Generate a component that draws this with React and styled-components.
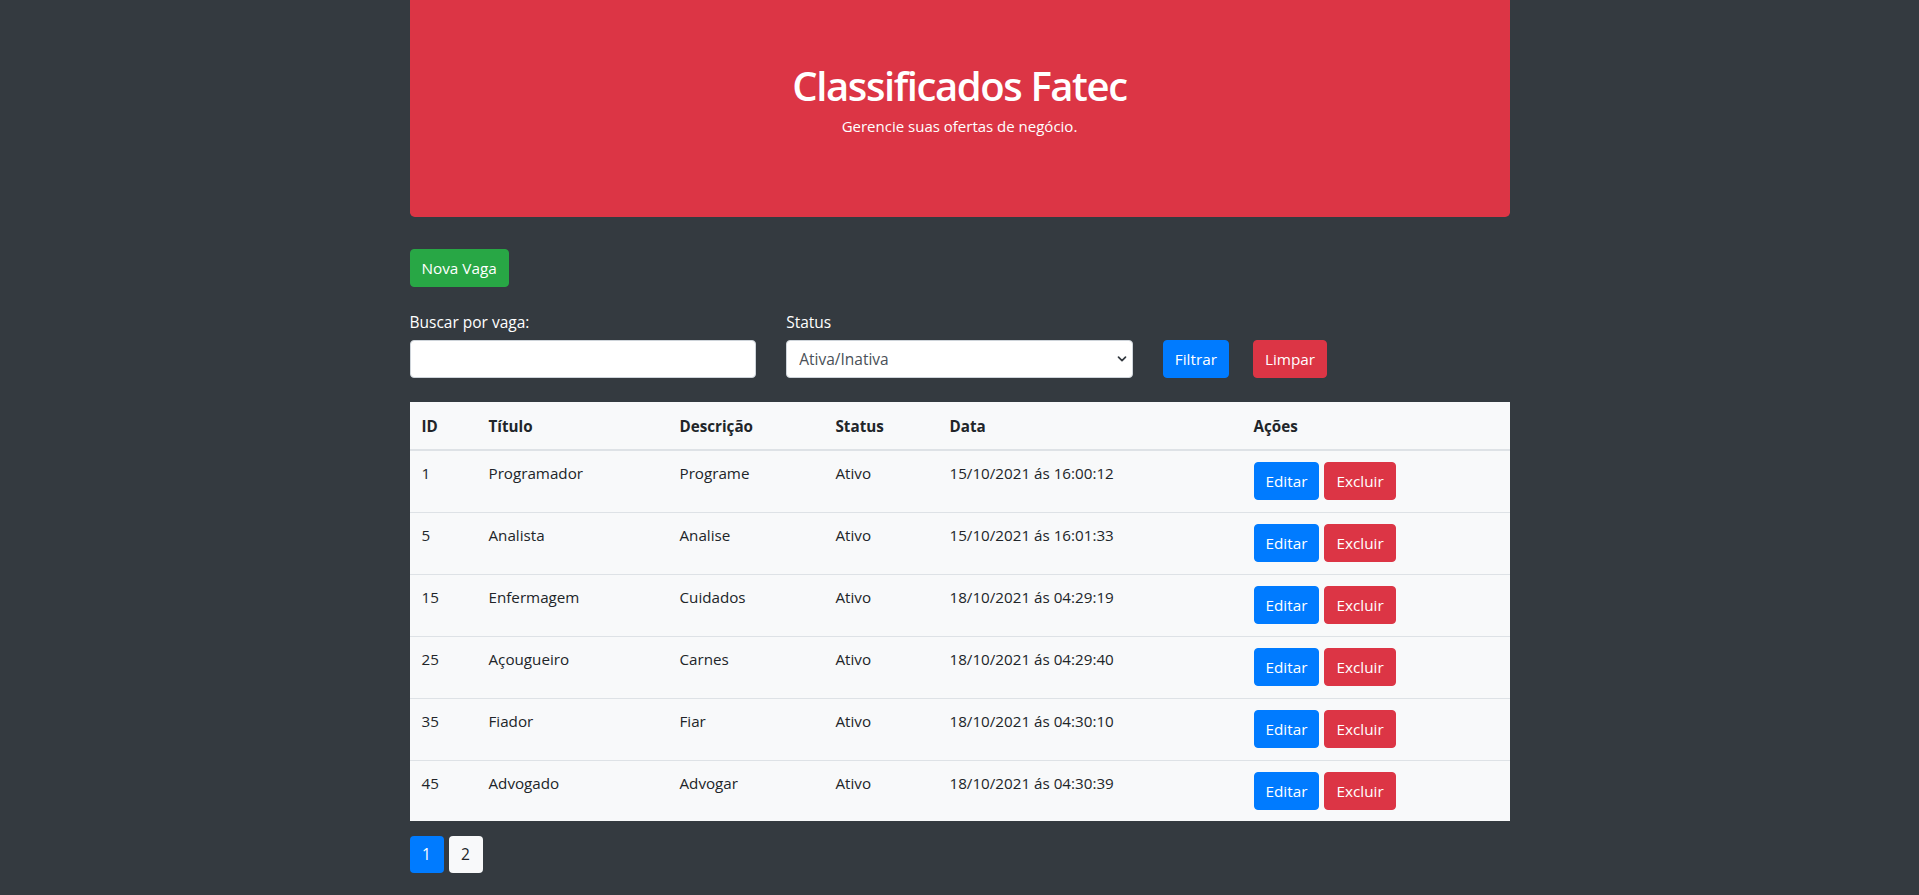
import React from "react";
import styled, { createGlobalStyle } from "styled-components";

const vagas = [
    { id: 1, titulo: "Programador", descricao: "Programe", status: "Ativo", data: "15/10/2021 ás 16:00:12" },
    { id: 5, titulo: "Analista", descricao: "Analise", status: "Ativo", data: "15/10/2021 ás 16:01:33" },
    { id: 15, titulo: "Enfermagem", descricao: "Cuidados", status: "Ativo", data: "18/10/2021 ás 04:29:19" },
    { id: 25, titulo: "Açougueiro", descricao: "Carnes", status: "Ativo", data: "18/10/2021 ás 04:29:40" },
    { id: 35, titulo: "Fiador", descricao: "Fiar", status: "Ativo", data: "18/10/2021 ás 04:30:10" },
    { id: 45, titulo: "Advogado", descricao: "Advogar", status: "Ativo", data: "18/10/2021 ás 04:30:39" },
];

const colors = {
    primary: "#007bff",
    success: "#28a745",
    danger: "#dc3545",
};

export default function App() {
    return (
        <>
            <GlobalStyle />
            <Container>
                <Jumbotron>
                    <Title>Classificados Fatec</Title>
                    <Subtitle>Gerencie suas ofertas de negócio.</Subtitle>
                </Jumbotron>

                <Toolbar>
                    <Button variant="success">Nova Vaga</Button>
                </Toolbar>

                <FilterRow>
                    <Field>
                        <Label>Buscar por vaga:</Label>
                        <Input type="text" />
                    </Field>
                    <Field>
                        <Label>Status</Label>
                        <SelectWrap>
                            <Select defaultValue="">
                                <option value="">Ativa/Inativa</option>
                                <option value="ativo">Ativo</option>
                                <option value="inativo">Inativo</option>
                            </Select>
                            <Chevron viewBox="0 0 10 10" width="10" height="10">
                                <path
                                    d="M1.5 3.2 L5 6.7 L8.5 3.2"
                                    fill="none"
                                    stroke="#343a40"
                                    strokeWidth="1.7"
                                    strokeLinecap="round"
                                    strokeLinejoin="round"
                                />
                            </Chevron>
                        </SelectWrap>
                    </Field>
                    <FilterActions>
                        <Button variant="primary">Filtrar</Button>
                        <Button variant="danger">Limpar</Button>
                    </FilterActions>
                </FilterRow>

                <Table>
                    <thead>
                        <tr>
                            <Th width={67}>ID</Th>
                            <Th width={191}>Título</Th>
                            <Th width={156}>Descrição</Th>
                            <Th width={114}>Status</Th>
                            <Th width={304}>Data</Th>
                            <Th>Ações</Th>
                        </tr>
                    </thead>
                    <tbody>
                        {vagas.map((v) => (
                            <tr key={v.id}>
                                <Td>{v.id}</Td>
                                <Td>{v.titulo}</Td>
                                <Td>{v.descricao}</Td>
                                <Td>{v.status}</Td>
                                <Td>{v.data}</Td>
                                <Td>
                                    <RowActions>
                                        <Button variant="primary">Editar</Button>
                                        <Button variant="danger">Excluir</Button>
                                    </RowActions>
                                </Td>
                            </tr>
                        ))}
                    </tbody>
                </Table>

                <Pagination>
                    <PageItem active>1</PageItem>
                    <PageItem>2</PageItem>
                </Pagination>
            </Container>
        </>
    );
}

const GlobalStyle = createGlobalStyle`
    * {
        box-sizing: border-box;
    }
    body {
        margin: 0;
        background: #343a40;
        color: #212529;
        font-family: "Open Sans", "Noto Sans", Arial, sans-serif;
        font-size: 16px;
        line-height: 1.5;
    }
`;

const Container = styled.div`
    width: 1100px;
    margin: 0 auto;
    padding-bottom: 23px;
`;

const Jumbotron = styled.div`
    background: ${colors.danger};
    color: #fff;
    text-align: center;
    padding: 62px 32px 63px;
    border-radius: 0 0 4.8px 4.8px;
`;

const Title = styled.h1`
    margin: 0 0 5px;
    font-size: 40px;
    font-weight: 600;
    line-height: 1.2;
    letter-spacing: -1.4px;
`;

const Subtitle = styled.p`
    margin: 0 0 16px;
    font-size: 15px;
`;

const Toolbar = styled.div`
    display: flex;
    margin-top: 32px;
`;

const Button = styled.button`
    display: inline-block;
    height: 38px;
    padding: 0 11px;
    border: 1px solid ${(p) => colors[p.variant]};
    border-radius: 4px;
    background: ${(p) => colors[p.variant]};
    color: #fff;
    font-family: inherit;
    font-size: 15.3px;
    line-height: 36px;
    cursor: pointer;
`;

const FilterRow = styled.div`
    display: grid;
    grid-template-columns: 346.67px 346.67px auto;
    column-gap: 30px;
    margin-top: 24px;
`;

const Field = styled.div`
    display: flex;
    flex-direction: column;
`;

const Label = styled.label`
    color: #fff;
    font-size: 15.5px;
    margin-bottom: 6px;
`;

const Input = styled.input`
    height: 38px;
    width: 100%;
    padding: 6px 12px;
    border: 1px solid #ced4da;
    border-radius: 4px;
    background: #fff;
    font-family: inherit;
    font-size: 16px;
`;

const SelectWrap = styled.div`
    position: relative;
`;

const Select = styled.select`
    appearance: none;
    width: 100%;
    height: 38px;
    padding: 6px 28px 6px 12px;
    border: 1px solid #ced4da;
    border-radius: 4px;
    background: #fff;
    color: #495057;
    font-family: inherit;
    font-size: 15.5px;
`;

const Chevron = styled.svg`
    position: absolute;
    right: 6px;
    top: 14px;
    pointer-events: none;
`;

const FilterActions = styled.div`
    display: flex;
    align-items: flex-end;
    gap: 24px;
`;

const Table = styled.table`
    width: 100%;
    margin-top: 24px;
    border-collapse: collapse;
    background: #f8f9fa;
    color: #212529;
    font-size: 15.2px;
`;

const Th = styled.th`
    width: ${(p) => (p.width ? `${p.width}px` : "auto")};
    padding: 13px 12px 11px;
    text-align: left;
    font-weight: 700;
    vertical-align: bottom;
    border-bottom: 2px solid #dee2e6;
`;

const Td = styled.td`
    padding: 11px 12px 12px;
    vertical-align: top;
    border-top: 1px solid #dee2e6;
    tr:first-child > & {
        border-top: none;
    }
    tr:last-child > & {
        padding-bottom: 11px;
    }
`;

const RowActions = styled.div`
    display: flex;
    gap: 5px;
`;

const Pagination = styled.div`
    display: flex;
    gap: 5px;
    margin-top: 15px;
`;

const PageItem = styled.button`
    width: 34px;
    height: 37px;
    padding: 0;
    border: none;
    border-radius: 4px;
    background: ${(p) => (p.active ? colors.primary : "#f8f9fa")};
    color: ${(p) => (p.active ? "#fff" : "#212529")};
    font-family: inherit;
    font-size: 15.5px;
    cursor: pointer;
`;
